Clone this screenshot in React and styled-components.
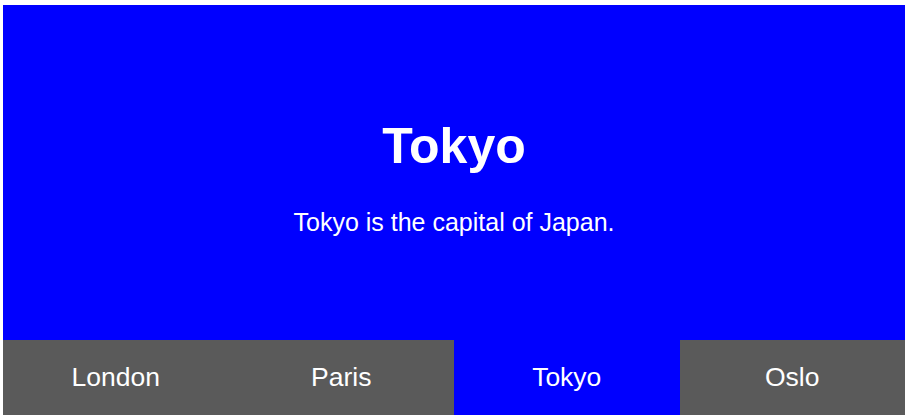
import React, { useState } from "react";
import styled, { createGlobalStyle } from "styled-components";

const GlobalStyle = createGlobalStyle`
  html, body {
    margin: 0;
    padding: 0;
    background: #ffffff;
  }
  body {
    padding: 5px 2px 4px 3px;
    font-family: "Liberation Sans", Arial, sans-serif;
  }
`;

const cities = [
  { name: "London", text: "London is the capital city of England." },
  { name: "Paris", text: "Paris is the capital of France." },
  { name: "Tokyo", text: "Tokyo is the capital of Japan." },
  { name: "Oslo", text: "Oslo is the capital of Norway." },
];

const Wrapper = styled.div`
  width: 902px;
  display: flex;
  flex-direction: column;
`;

const Panel = styled.div`
  height: 335px;
  background: #0000ff;
  color: #ffffff;
  display: flex;
  flex-direction: column;
  align-items: center;
  padding-top: 111px;
  box-sizing: border-box;
`;

const Title = styled.h1`
  margin: 0;
  font-size: 50px;
  font-weight: bold;
  line-height: 60px;
`;

const Text = styled.p`
  margin: 31px 0 0;
  font-size: 25px;
  line-height: 30px;
`;

const TabBar = styled.div`
  display: grid;
  grid-template-columns: repeat(4, 1fr);
`;

const Tab = styled.button`
  height: 75px;
  border: none;
  outline: none;
  cursor: pointer;
  padding: 0;
  font-family: "Liberation Sans", Arial, sans-serif;
  font-size: 26.5px;
  color: #ffffff;
  background: ${(p) => (p.$active ? "#0000ff" : "#5a5a5a")};
`;

const App = () => {
  const [active, setActive] = useState(2);
  const city = cities[active];

  return (
    <>
      <GlobalStyle />
      <Wrapper>
        <Panel>
          <Title>{city.name}</Title>
          <Text>{city.text}</Text>
        </Panel>
        <TabBar>
          {cities.map((c, i) => (
            <Tab key={c.name} $active={i === active} onClick={() => setActive(i)}>
              {c.name}
            </Tab>
          ))}
        </TabBar>
      </Wrapper>
    </>
  );
};

export default App;
